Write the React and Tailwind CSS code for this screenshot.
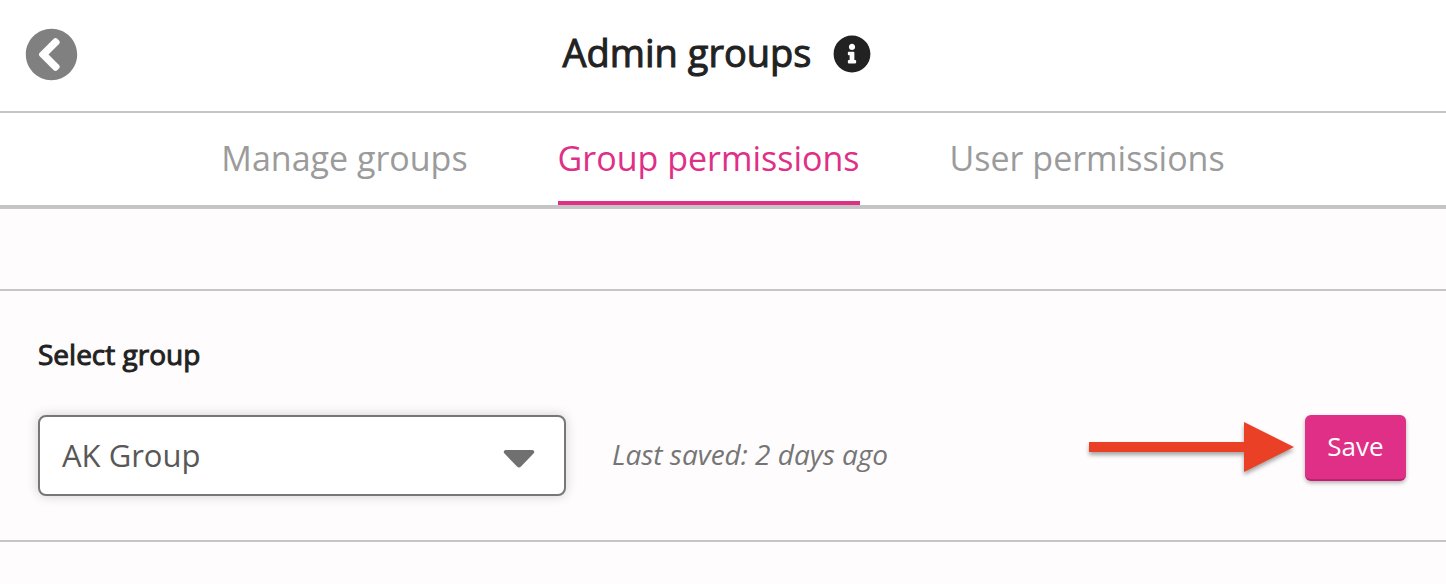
import { FaChevronCircleLeft, FaInfoCircle } from "react-icons/fa";

const tabs = [
  { label: "Manage groups", active: false },
  { label: "Group permissions", active: true },
  { label: "User permissions", active: false },
];

function Header() {
  return (
    <header className="grid h-[113px] grid-cols-[52px_1fr_52px] items-center border-b-2 border-[#c5c5c5] bg-white px-[25px] pb-[3px]">
      <button type="button" aria-label="Back" className="text-[#808080]">
        <FaChevronCircleLeft className="size-[53px]" />
      </button>
      <div className="flex items-center justify-center gap-[22px] pr-3">
        <h1 className="pb-1 text-[38px] leading-[52px] text-[#222] [-webkit-text-stroke:1px_#222]">Admin groups</h1>
        <button type="button" aria-label="Information" className="text-[#222]">
          <FaInfoCircle className="size-[38px]" />
        </button>
      </div>
    </header>
  );
}

function Tabs() {
  return (
    <nav className="flex h-24 justify-center gap-[90px] border-b-4 border-[#c5c5c5] bg-white">
      {tabs.map((tab) => (
        <a
          key={tab.label}
          href="#"
          className={
            tab.active
              ? "border-b-4 border-[#df2f87] pt-5 text-[34px] leading-[50px] text-[#df2f87]"
              : "border-b-4 border-transparent pt-5 text-[34px] leading-[50px] text-[#9b9b9b]"
          }
        >
          {tab.label}
        </a>
      ))}
    </nav>
  );
}

function GroupForm() {
  return (
    <form className="mt-20 border-y-2 border-[#c5c5c5] px-10 pt-[43px] pb-11" onSubmit={(e) => e.preventDefault()}>
      <label htmlFor="group" className="-ml-0.5 block text-[28px] leading-10 text-[#222] [-webkit-text-stroke:1px_#222]">
        Select group
      </label>
      <div className="mt-[41px] -ml-0.5 flex items-start">
        <div className="relative w-[528px]">
          <select
            id="group"
            className="h-[81px] w-full appearance-none rounded-lg border-2 border-[#777] bg-white px-[22px] text-[31px] text-[#585858] shadow-[0_0_12px_rgba(0,0,0,0.18)]"
          >
            <option>AK Group</option>
          </select>
          <svg viewBox="0 0 32 18" className="pointer-events-none absolute top-[35px] right-[31px] h-[18px] w-8" aria-hidden="true">
            <path d="M2.500 0H29.500Q32.500 .8 30.500 3.500L18 16.500Q16 18.500 14 16.500L1.500 3.500Q-.5 .8 2.500 0Z" fill="#707070" />
          </svg>
        </div>
        <p className="ml-[46px] text-[28px] leading-[78px] text-[#757575] italic">Last saved: 2 days ago</p>
        <svg viewBox="0 0 206 52" className="mt-[7px] ml-auto h-[52px] w-[206px] overflow-visible drop-shadow-[0_3px_2px_rgba(0,0,0,0.35)]" aria-hidden="true">
          <path d="M0 20H155V0L205 25L155 50V30H0Z" fill="#ea4025" />
        </svg>
        <button type="submit" className="ml-[10px] h-[66px] w-[101px] rounded-md border-b-2 border-[#bd2270] bg-[#df2f87] pb-0.5 text-[26px] text-white shadow-[0_2px_4px_rgba(0,0,0,0.3)]">
          Save
        </button>
      </div>
    </form>
  );
}

export default function App() {
  return (
    <main className="min-h-screen bg-[#fefcfd] font-['Open_Sans','Noto_Sans',sans-serif]">
      <Header />
      <Tabs />
      <GroupForm />
    </main>
  );
}
